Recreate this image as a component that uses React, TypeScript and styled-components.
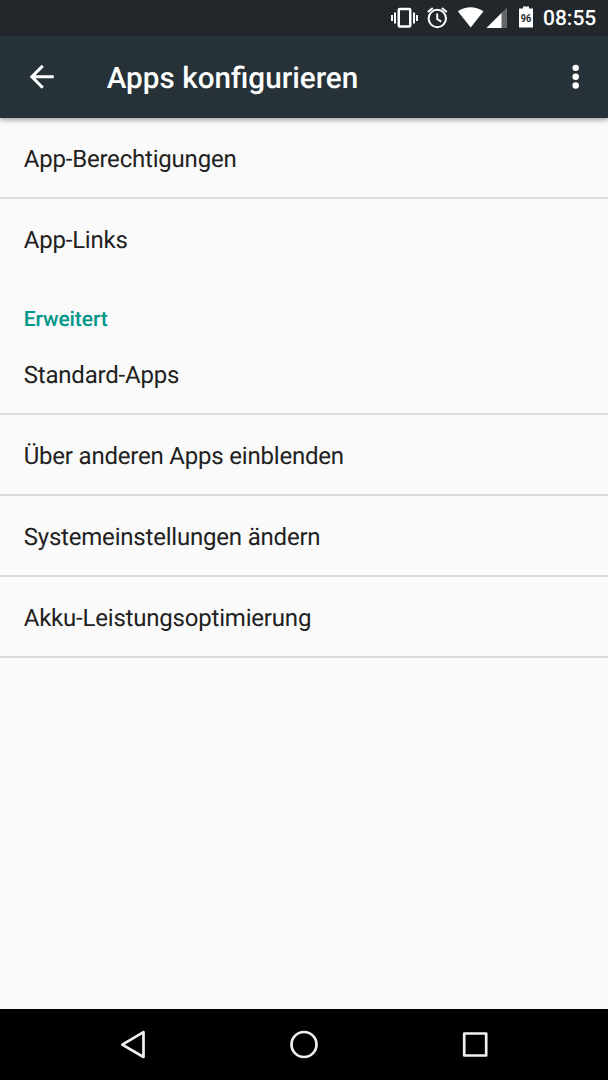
import React from "react";
import styled, { createGlobalStyle } from "styled-components";

const Global = createGlobalStyle`
  * { box-sizing: border-box; }
  body { margin: 0; background: #fafafa; font-family: Roboto, "Liberation Sans", sans-serif; text-rendering: geometricPrecision; }
`;
const Screen = styled.div`
  display: flex; flex-direction: column; width: 608px; height: 1080px; background: #fafafa;
`;
const StatusBar = styled.div`
  height: 36px; flex: none; background: #21272b; display: flex; justify-content: flex-end; color: #fff;
`;
const StatusIcons = styled.svg`display: block; width: 160px; height: 36px;`;
const BatteryLevel = styled.text`font: 700 11px Roboto, sans-serif; fill: #21272b;`;
const Clock = styled.div`
  width: 68px; padding-left: 3px; line-height: 39px; font-size: 21px; font-weight: 500; white-space: nowrap;
`;
const AppBar = styled.header`
  height: 82px; flex: none; background: #263238; color: #fff; display: flex; align-items: center;
  padding: 0 14px 0 24px; box-shadow: 0 2px 5px rgba(0,0,0,.35); z-index: 1;
`;
const BarIcon = styled.svg`display: block; width: 36px; height: 36px; flex: none;`;
const Title = styled.h1`
  margin: 4px 0 0 46.700px; flex: 1; font-size: 29.7px; line-height: 36px; font-weight: 500; white-space: nowrap;
`;
const Content = styled.main`flex: 1;`;
const Row = styled.div<{ $divider?: boolean; $height?: number }>`
  height: ${p => p.$height ?? 81}px; padding: 0 23.7px; font-size: 24px; line-height: 82px; color: #212121;
  letter-spacing: -0.2px; white-space: nowrap;
  border-bottom: ${p => (p.$divider === false ? "none" : "2px solid #dadada")};
`;
const Section = styled.h2`
  margin: 0; height: 55px; padding: 0 23.7px; font-size: 21px; line-height: 82px; font-weight: 500; color: #009688;
  letter-spacing: -0.1px;
`;
const NavBar = styled.nav`height: 71px; flex: none; background: #000;`;
const NavIcons = styled.svg`display: block; width: 608px; height: 71px;`;

export default function App() {
  return (
    <Screen>
      <Global />
      <StatusBar>
        <StatusIcons viewBox="380 0 160 36" fill="#fff">
          <path d="M391 15h2v6h-2zM394 12.500h2v11h-2zM413 12.500h2v11h-2zM416 15h2v6h-2z" />
          <rect x="398.750" y="9" width="11.500" height="17.500" rx="1" fill="none" stroke="#fff" strokeWidth="2.500" />
          <g fill="none" stroke="#fff" strokeWidth="2">
            <circle cx="437.300" cy="18.500" r="8.700" />
            <path d="M437.200 13.500v5.500l4 2.700M427.800 12l5-4M446.800 12l-5-4" />
          </g>
          <path d="M457.800 11.300Q470.500 3.300 483.500 11.300L470.700 27.500Z" />
          <path d="M507 7.500V28H486.500Z" fillOpacity=".3" />
          <path d="M501.500 13V28H486.500Z" />
          <path d="M523 6.500h6v2h4v19h-14v-19h4z" />
          <BatteryLevel x="520.800" y="21.500" textLength="10.400" lengthAdjust="spacingAndGlyphs">96</BatteryLevel>
        </StatusIcons>
        <Clock>08:55</Clock>
      </StatusBar>
      <AppBar>
        <BarIcon viewBox="0.2 0.1 24 24" fill="#fff"><path d="M20 11H7.830l5.590-5.590L12 4l-8 8 8 8 1.410-1.410L7.830 13H20v-2z" /></BarIcon>
        <Title>Apps konfigurieren</Title>
        <BarIcon viewBox="0.2 0.2 24 24" fill="#fff"><circle cx="12" cy="6.100" r="2.150" /><circle cx="12" cy="12" r="2.150" /><circle cx="12" cy="17.900" r="2.150" /></BarIcon>
      </AppBar>
      <Content>
        <Row>App-Berechtigungen</Row>
        <Row $divider={false} $height={80}>App-Links</Row>
        <Section>Erweitert</Section>
        <Row>Standard-Apps</Row>
        <Row>Über anderen Apps einblenden</Row>
        <Row>Systemeinstellungen ändern</Row>
        <Row>Akku-Leistungsoptimierung</Row>
      </Content>
      <NavBar>
        <NavIcons viewBox="0 0 608 71" fill="none" stroke="#f0f0f0" strokeWidth="2.700" strokeLinejoin="round">
          <path d="M122.300 35.600L143.500 23.200V48Z" />
          <circle cx="304" cy="35.500" r="12.500" />
          <rect x="464.200" y="24.500" width="22" height="22" />
        </NavIcons>
      </NavBar>
    </Screen>
  );
}
